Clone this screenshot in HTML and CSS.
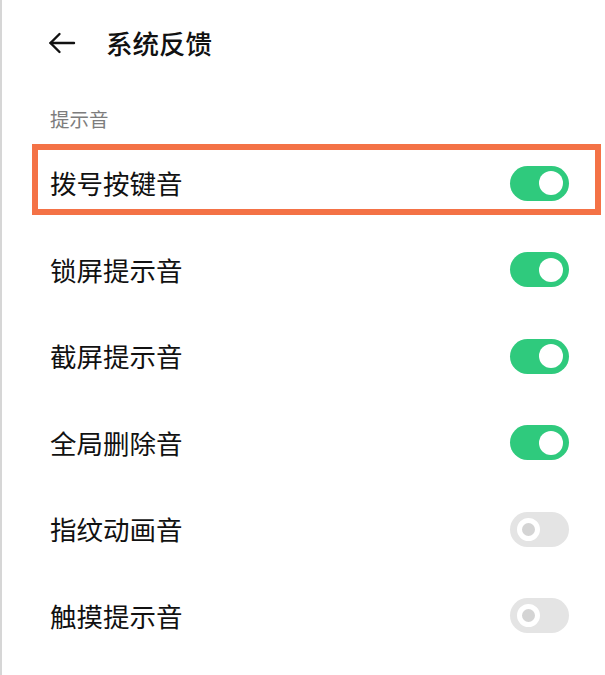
FILE: index.html
```html
<!DOCTYPE html>
<html lang="zh-CN">
<head>
  <meta charset="UTF-8">
  <meta name="viewport" content="width=device-width, initial-scale=1.0">
  <title>系统反馈</title>
  <link rel="stylesheet" href="styles.css">
</head>
<body>

  <div class="page">
    <div class="header">
      <button class="back" aria-label="返回">
        <svg width="28" height="22" viewBox="0 0 28 22" fill="none" stroke="#111" stroke-width="2.4" stroke-linecap="round" stroke-linejoin="round">
          <path d="M26 11H2.5"/>
          <path d="M11.5 2L2.5 11L11.5 20"/>
        </svg>
      </button>
      <h1>系统反馈</h1>
    </div>

    <div class="section-title">提示音</div>

    <div class="list">
      <div class="row highlight">
        <span class="label">拨号按键音</span>
        <span class="switch on"></span>
      </div>
      <div class="row">
        <span class="label">锁屏提示音</span>
        <span class="switch on"></span>
      </div>
      <div class="row">
        <span class="label">截屏提示音</span>
        <span class="switch on"></span>
      </div>
      <div class="row">
        <span class="label">全局删除音</span>
        <span class="switch on"></span>
      </div>
      <div class="row">
        <span class="label">指纹动画音</span>
        <span class="switch"></span>
      </div>
      <div class="row">
        <span class="label">触摸提示音</span>
        <span class="switch"></span>
      </div>
    </div>
  </div>

</body>
</html>
```

FILE: styles.css
```css
body {
  margin: 0;
  background-color: #fff;
  font-family: "Noto Sans CJK SC", "Noto Sans", sans-serif;
  color: #111;
}

.page {
  height: 675px;
  border-left: 2px solid #d6d6d6;
  box-sizing: border-box;
  overflow: hidden;
}

.header {
  display: flex;
  align-items: center;
  height: 86px;
  padding-left: 46px;
}

.back {
  display: flex;
  align-items: center;
  padding: 0;
  border: none;
  background: none;
  width: 28px;
  height: 22px;
  margin-right: 30px;
}

h1 {
  margin: 0;
  font-size: 26.5px;
  font-weight: 500;
  line-height: 30px;
}

.section-title {
  margin-top: 21px;
  padding-left: 48px;
  font-size: 19.5px;
  line-height: 24px;
  color: #7d7d7d;
}

.list {
  margin-top: 9px;
}

.row {
  position: relative;
  display: flex;
  align-items: center;
  justify-content: space-between;
  height: 86.5px;
  padding: 0 36px 0 48px;
}

.label {
  font-size: 26.5px;
  line-height: 30px;
}

/* orange frame drawn around the dial-key row */
.highlight::after {
  content: "";
  position: absolute;
  top: 4px;
  left: 30px;
  right: 4px;
  height: 71px;
  border: 6px solid #f47246;
  box-sizing: border-box;
}

.switch {
  position: relative;
  width: 59px;
  height: 35px;
  border-radius: 18px;
  background-color: #e4e4e4;
}

.switch::after {
  content: "";
  position: absolute;
  top: 6px;
  left: 7px;
  width: 13px;
  height: 13px;
  border: 5px solid #fff;
  border-radius: 50%;
  background-color: #d4d4d4;
}

.switch.on {
  background-color: #2fca7d;
}

.switch.on::after {
  top: 5.5px;
  left: auto;
  right: 6px;
  width: 24px;
  height: 24px;
  border: none;
  background-color: #fff;
}
```
